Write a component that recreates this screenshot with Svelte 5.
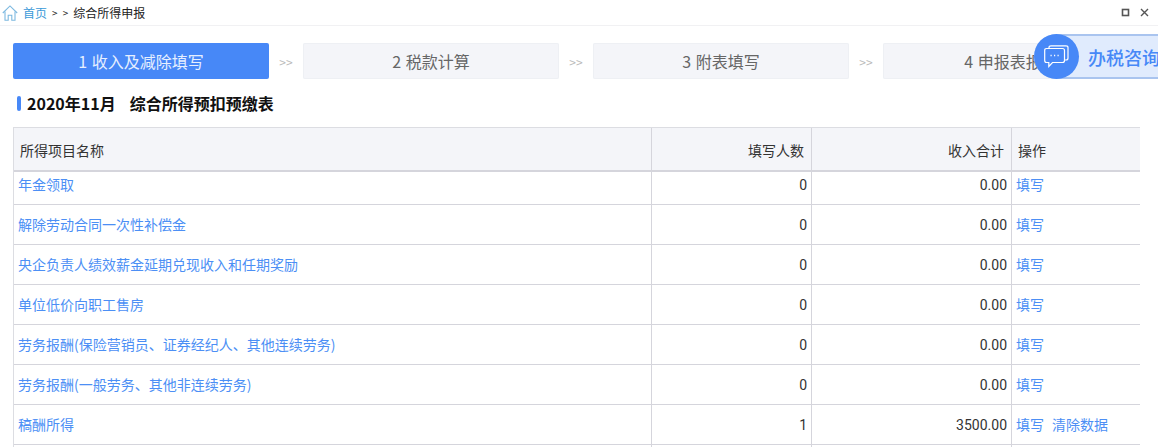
<script>
	const steps = ["1 收入及减除填写", "2 税款计算", "3 附表填写", "4 申报表报送"];
	const rows = [
		{ name: "年金领取", count: 0, total: "0.00", first: true },
		{ name: "解除劳动合同一次性补偿金", count: 0, total: "0.00" },
		{ name: "央企负责人绩效薪金延期兑现收入和任期奖励", count: 0, total: "0.00" },
		{ name: "单位低价向职工售房", count: 0, total: "0.00" },
		{ name: "劳务报酬(保险营销员、证券经纪人、其他连续劳务)", count: 0, total: "0.00" },
		{ name: "劳务报酬(一般劳务、其他非连续劳务)", count: 0, total: "0.00" },
		{ name: "稿酬所得", count: 1, total: "3500.00", clear: true },
		{ name: "", count: "", total: "" },
	];
</script>

<div class="page">
	<header class="topbar">
		<div class="crumbs">
			<svg class="home" width="16" height="16" viewBox="0 0 16 16" fill="none" stroke="#7db9e0" stroke-width="1.1">
				<path d="M0.8 8 L8 0.9 L15.2 8" />
				<path d="M3 6.5 V15.3 H6.2 V10.2 H9.8 V15.3 H13 V6.5" />
			</svg>
			<span class="home-link">首页</span>
			<span class="sep">&gt; &gt;</span>
			<span>综合所得申报</span>
		</div>
		<div class="win">
			<svg width="9" height="9" viewBox="0 0 9 9" fill="none" stroke="#555" stroke-width="1.6"><rect x="1.5" y="1.5" width="6" height="6" /></svg>
			<svg width="9" height="9" viewBox="0 0 9 9" fill="none" stroke="#555" stroke-width="1.4"><path d="M1 1 L8 8 M8 1 L1 8" /></svg>
		</div>
	</header>

	<div class="steps">
		{#each steps as step, i}
			{#if i > 0}<span class="arrow">&gt;&gt;</span>{/if}
			<div class="step" class:active={i === 0}>{step}</div>
		{/each}
	</div>

	<h1 class="title"><span class="bar"></span>2020年11月<span class="gap"></span>综合所得预扣预缴表</h1>

	<div class="table">
		<div class="row head">
			<div class="cell">所得项目名称</div>
			<div class="cell num">填写人数</div>
			<div class="cell num">收入合计</div>
			<div class="cell">操作</div>
		</div>
		{#each rows as row}
			<div class="row" class:first={row.first}>
				<div class="cell name">{row.name}</div>
				<div class="cell val">{row.count}</div>
				<div class="cell val">{row.total}</div>
				<div class="cell ops">
					{#if row.name}<span>填写</span>{/if}
					{#if row.clear}<span>清除数据</span>{/if}
				</div>
			</div>
		{/each}
	</div>

	<div class="consult">
		<div class="disc">
			<svg width="25" height="23" viewBox="0 0 25 23" fill="none" stroke="#fff" stroke-width="1.2">
				<path d="M5 3 V2.5 Q5 0.8 7 0.8 H22 Q24 0.8 24 2.5 V13 Q24 15 22 15 H21" />
				<path d="M2.5 3.5 H18.5 Q20.5 3.5 20.5 5.5 V15.5 Q20.5 17.5 18.5 17.5 H8.5 L4.8 21.5 V17.5 H2.5 Q0.7 17.5 0.7 15.5 V5.5 Q0.7 3.5 2.5 3.5 Z" />
				<path d="M6.5 10.5 H7.7 M10 10.5 H11.2 M13.5 10.5 H14.7" stroke-width="1.5" />
			</svg>
		</div>
		<span class="consult-text">办税咨询</span>
	</div>
</div>

<style>
	:global(body) {
		margin: 0;
		background: #fff;
		overflow: hidden;
	}

	.page {
		position: relative;
		width: 1158px;
		height: 447px;
		overflow: hidden;
		font-family: "Noto Sans CJK SC", "Liberation Sans", sans-serif;
		font-size: 14px;
		color: #333;
	}

	.topbar {
		display: flex;
		justify-content: space-between;
		align-items: center;
		height: 25px;
		padding: 0 8px 0 2px;
		border-bottom: 1px solid #f1f1f3;
		color: #222;
		font-size: 12px;
	}

	.crumbs {
		display: flex;
		align-items: center;
		gap: 5px;
	}

	.home-link {
		color: #3a9ad9;
		font-size: 12px;
	}

	.sep {
		font-size: 10px;
		word-spacing: 3px;
	}

	.win {
		display: flex;
		gap: 10px;
		padding-right: 1px;
	}

	.steps {
		display: flex;
		align-items: center;
		margin: 17px 0 0 13px;
		height: 36px;
	}

	.step {
		flex: none;
		width: 256px;
		height: 36px;
		line-height: 36px;
		text-align: center;
		font-size: 16px;
		word-spacing: 1px;
		color: #666;
		background: #f4f5f9;
		border-radius: 2px;
		box-shadow: inset 0 0 0 1px #eef0f4;
	}

	.step.active {
		background: #4788f7;
		color: #e6efff;
		box-shadow: none;
	}

	.arrow {
		flex: none;
		width: 34px;
		text-align: center;
		font-size: 12px;
		color: #bbb;
	}

	.title {
		display: flex;
		align-items: center;
		margin: 12px 0 12px 17px;
		height: 24px;
		font-size: 16px;
		font-weight: 700;
		color: #111;
	}

	.bar {
		width: 4px;
		height: 15px;
		margin-right: 6px;
		border-radius: 2px;
		background: #4788f7;
	}

	.gap {
		width: 14px;
	}

	.table {
		margin-left: 13px;
		width: 1127px;
		border-top: 1px solid #dcdde2;
		border-left: 1px solid #dcdde2;
		box-sizing: border-box;
	}

	.row {
		display: grid;
		grid-template-columns: 638px 160px 200px 1fr;
		height: 40px;
		box-sizing: border-box;
		border-bottom: 1px solid #d5d5dc;
	}

	.row.first {
		height: 33px;
	}

	.row.first .cell {
		padding-bottom: 9px;
	}

	.row:not(.head):not(.first) .cell {
		padding-bottom: 2px;
	}

	.row .val,
	.row.first .val {
		padding-top: 2px;
	}

	.head {
		height: 44px;
		background: #f4f5f9;
		border-bottom: 2px solid #d5d5dc;
	}

	.cell {
		display: flex;
		align-items: center;
		box-sizing: border-box;
		padding: 0 5px;
		border-right: 1px solid #d5d5dc;
	}

	.head .cell {
		padding: 1px 6px 0;
	}

	.cell:last-child {
		border-right: 0;
	}

	.head .num {
		justify-content: flex-end;
		padding-right: 7px;
	}

	.val {
		justify-content: flex-end;
		padding-right: 4px;
		font-family: "Roboto", "Liberation Sans", sans-serif;
		font-size: 14px;
	}

	.name,
	.ops {
		padding-left: 4px;
		color: #4c8ff5;
	}

	.ops {
		gap: 8px;
	}

	.consult {
		position: absolute;
		left: 1034px;
		top: 34px;
		display: flex;
		align-items: center;
		width: 140px;
		height: 45px;
		box-sizing: border-box;
		background: #e0ebfd;
		border-top: 2px solid #a9c4ef;
		border-bottom: 2px solid #a9c4ef;
		border-radius: 23px 0 0 23px;
	}

	.disc {
		position: absolute;
		left: 0;
		top: -2px;
		display: flex;
		align-items: center;
		justify-content: center;
		width: 45px;
		height: 45px;
		border-radius: 50%;
		background: #4788f7;
	}

	.consult-text {
		margin-left: 54px;
		font-size: 18px;
		font-weight: 500;
		white-space: nowrap;
		color: #4788f7;
	}
</style>
